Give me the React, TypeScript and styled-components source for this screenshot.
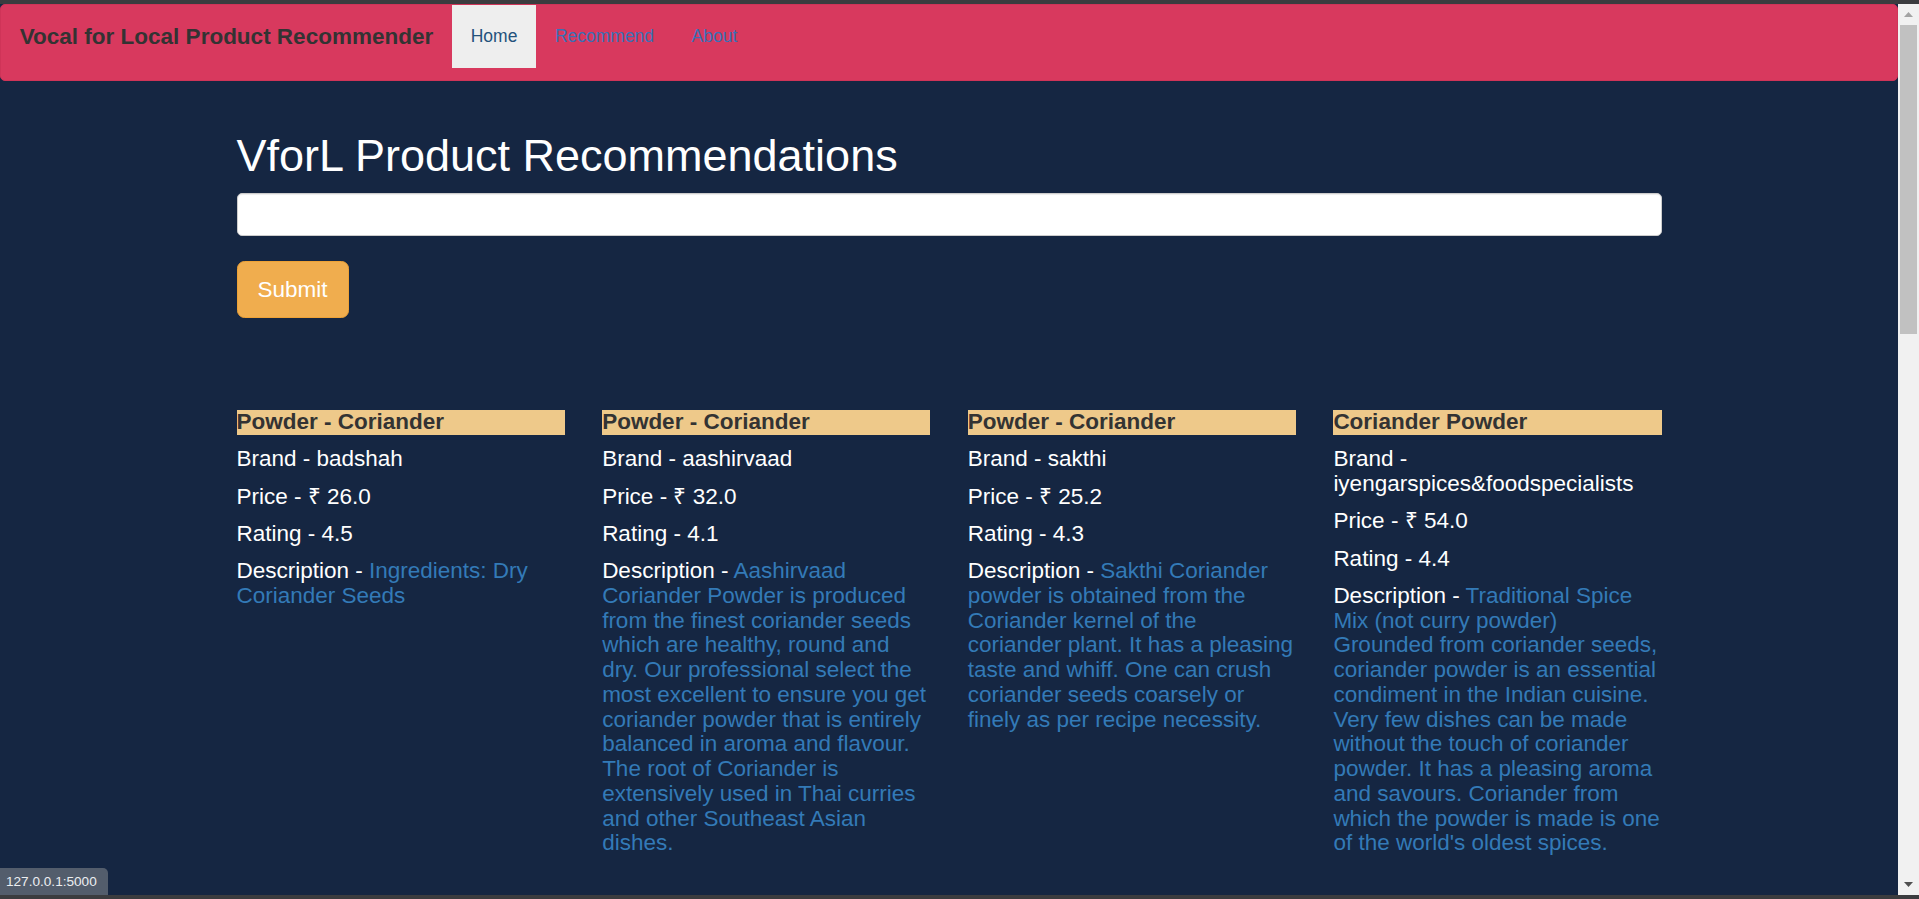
import React from "react";
import styled, { createGlobalStyle } from "styled-components";

/* --- data --- */

type Product = {
  title: string;
  brand: string;
  price: string;
  rating: string;
  description: string;
};

const products: Product[] = [
  {
    title: "Powder - Coriander",
    brand: "badshah",
    price: "26.0",
    rating: "4.5",
    description: "Ingredients: Dry Coriander Seeds",
  },
  {
    title: "Powder - Coriander",
    brand: "aashirvaad",
    price: "32.0",
    rating: "4.1",
    description:
      "Aashirvaad Coriander Powder is produced from the finest coriander seeds which are healthy, round and dry. Our professional select the most excellent to ensure you get coriander powder that is entirely balanced in aroma and flavour. The root of Coriander is extensively used in Thai curries and other Southeast Asian dishes.",
  },
  {
    title: "Powder - Coriander",
    brand: "sakthi",
    price: "25.2",
    rating: "4.3",
    description:
      "Sakthi Coriander powder is obtained from the Coriander kernel of the coriander plant. It has a pleasing taste and whiff. One can crush coriander seeds coarsely or finely as per recipe necessity.",
  },
  {
    title: "Coriander Powder",
    brand: "iyengarspices&foodspecialists",
    price: "54.0",
    rating: "4.4",
    description:
      "Traditional Spice Mix (not curry powder) Grounded from coriander seeds, coriander powder is an essential condiment in the Indian cuisine. Very few dishes can be made without the touch of coriander powder. It has a pleasing aroma and savours. Coriander from which the powder is made is one of the world's oldest spices.",
  },
];

/* --- global --- */

const GlobalStyle = createGlobalStyle`
  html, body {
    margin: 0;
    padding: 0;
    height: 100%;
    overflow: hidden;
    background: #152642;
    font-family: "Liberation Sans", Arial, sans-serif;
  }
  * {
    box-sizing: border-box;
  }
`;

/* --- browser frame bits --- */

const Frame = styled.div`
  position: relative;
  height: 100vh;
  display: flex;
  flex-direction: column;
`;

const Strip = styled.div<{ $h: number }>`
  flex: 0 0 ${({ $h }) => $h}px;
  background: #3b3c3f;
`;

const Viewport = styled.div`
  flex: 1;
  min-height: 0;
  display: flex;
`;

const Page = styled.div`
  flex: 1;
  min-width: 0;
  overflow: hidden;
  background: #152642;
`;

const Scrollbar = styled.div`
  flex: 0 0 21px;
  display: flex;
  flex-direction: column;
  align-items: center;
  background: #f1f1f1;
`;

const Arrow = styled.div`
  flex: 0 0 21px;
  display: flex;
  align-items: center;
  justify-content: center;
`;

const Thumb = styled.div`
  width: 17px;
  height: 309px;
  background: #c1c1c1;
`;

const Spacer = styled.div`
  flex: 1;
`;

const StatusTag = styled.div`
  position: absolute;
  left: 0;
  bottom: 4px;
  height: 27px;
  width: 108px;
  padding-left: 6px;
  display: flex;
  align-items: center;
  background: #535d6c;
  color: #eceef1;
  font-size: 13.6px;
  border-top-right-radius: 5px;
`;

/* --- navbar --- */

const Navbar = styled.nav`
  height: 77px;
  margin-bottom: 25px;
  display: flex;
  align-items: flex-start;
  background: #d8395e;
  border: 1px solid #cf3458;
  border-radius: 5px;
`;

const Brand = styled.a`
  height: 62.5px;
  padding: 18.75px;
  font-size: 22.5px;
  line-height: 25px;
  font-weight: bold;
  color: #333;
  text-decoration: none;
`;

const NavList = styled.ul`
  display: flex;
  margin: 0;
  padding: 0;
  list-style: none;
`;

const NavLink = styled.a<{ $active?: boolean }>`
  display: block;
  height: 62.5px;
  padding: 18.75px;
  font-size: 17.5px;
  line-height: 25px;
  text-decoration: none;
  color: ${({ $active }) => ($active ? "#23527c" : "#3a6fb5")};
  background: ${({ $active }) => ($active ? "#eeeeee" : "transparent")};
`;

/* --- main --- */

const Container = styled.main`
  display: flow-root;
  width: 1425px;
  margin: 0 auto;
`;

const Heading = styled.h1`
  margin: 25px 0 12.5px;
  font-size: 45px;
  line-height: 1.1;
  font-weight: normal;
  color: #fff;
`;

const SearchInput = styled.input`
  display: block;
  width: 100%;
  height: 42.5px;
  padding: 7.5px 15px;
  font-family: inherit;
  font-size: 17.5px;
  border: 1.25px solid #ccc;
  border-radius: 5px;
  background: #fff;
  box-shadow: inset 0 1px 1px rgba(0, 0, 0, 0.075);
`;

const SubmitButton = styled.button`
  margin-top: 25.5px;
  padding: 12.5px 20px;
  font-family: inherit;
  font-size: 22.5px;
  line-height: 30px;
  color: #fff;
  background: #f0ad4e;
  border: 1.25px solid #eea236;
  border-radius: 7.5px;
  cursor: pointer;
`;

const Results = styled.div`
  margin-top: 92px;
  display: grid;
  grid-template-columns: repeat(4, 1fr);
  column-gap: 37.5px;
  align-items: start;
`;

const Card = styled.div``;

const Title = styled.h4`
  margin: 0 0 12.5px;
  font-size: 22.5px;
  line-height: 24.75px;
  font-weight: bold;
  color: #333;
  background: #eec98a;
`;

const Line = styled.h4`
  margin: 12.5px 0;
  font-size: 22.5px;
  line-height: 24.75px;
  font-weight: normal;
  color: #fff;
`;

const Desc = styled.span`
  color: #337ab7;
`;

/* --- component --- */

export default function App() {
  return (
    <>
      <GlobalStyle />
      <Frame>
        <Strip $h={4} />
        <Viewport>
          <Page>
            <Navbar>
              <Brand href="#">Vocal for Local Product Recommender</Brand>
              <NavList>
                <li>
                  <NavLink href="#" $active>
                    Home
                  </NavLink>
                </li>
                <li>
                  <NavLink href="#">Recommend</NavLink>
                </li>
                <li>
                  <NavLink href="#">About</NavLink>
                </li>
              </NavList>
            </Navbar>

            <Container>
              <Heading>VforL Product Recommendations</Heading>
              <SearchInput type="text" />
              <SubmitButton type="button">Submit</SubmitButton>

              <Results>
                {products.map((p, i) => (
                  <Card key={i}>
                    <Title>{p.title}</Title>
                    <Line>Brand - {p.brand}</Line>
                    <Line>Price - ₹ {p.price}</Line>
                    <Line>Rating - {p.rating}</Line>
                    <Line>
                      Description - <Desc>{p.description}</Desc>
                    </Line>
                  </Card>
                ))}
              </Results>
            </Container>
          </Page>

          <Scrollbar>
            <Arrow>
              <svg width="9" height="5" viewBox="0 0 9 5">
                <path d="M0 5 L4.5 0 L9 5 Z" fill="#a3a3a3" />
              </svg>
            </Arrow>
            <Thumb />
            <Spacer />
            <Arrow>
              <svg width="9" height="5" viewBox="0 0 9 5">
                <path d="M0 0 L9 0 L4.5 5 Z" fill="#505050" />
              </svg>
            </Arrow>
          </Scrollbar>
        </Viewport>
        <Strip $h={4} />
        <StatusTag>127.0.0.1:5000</StatusTag>
      </Frame>
    </>
  );
}
